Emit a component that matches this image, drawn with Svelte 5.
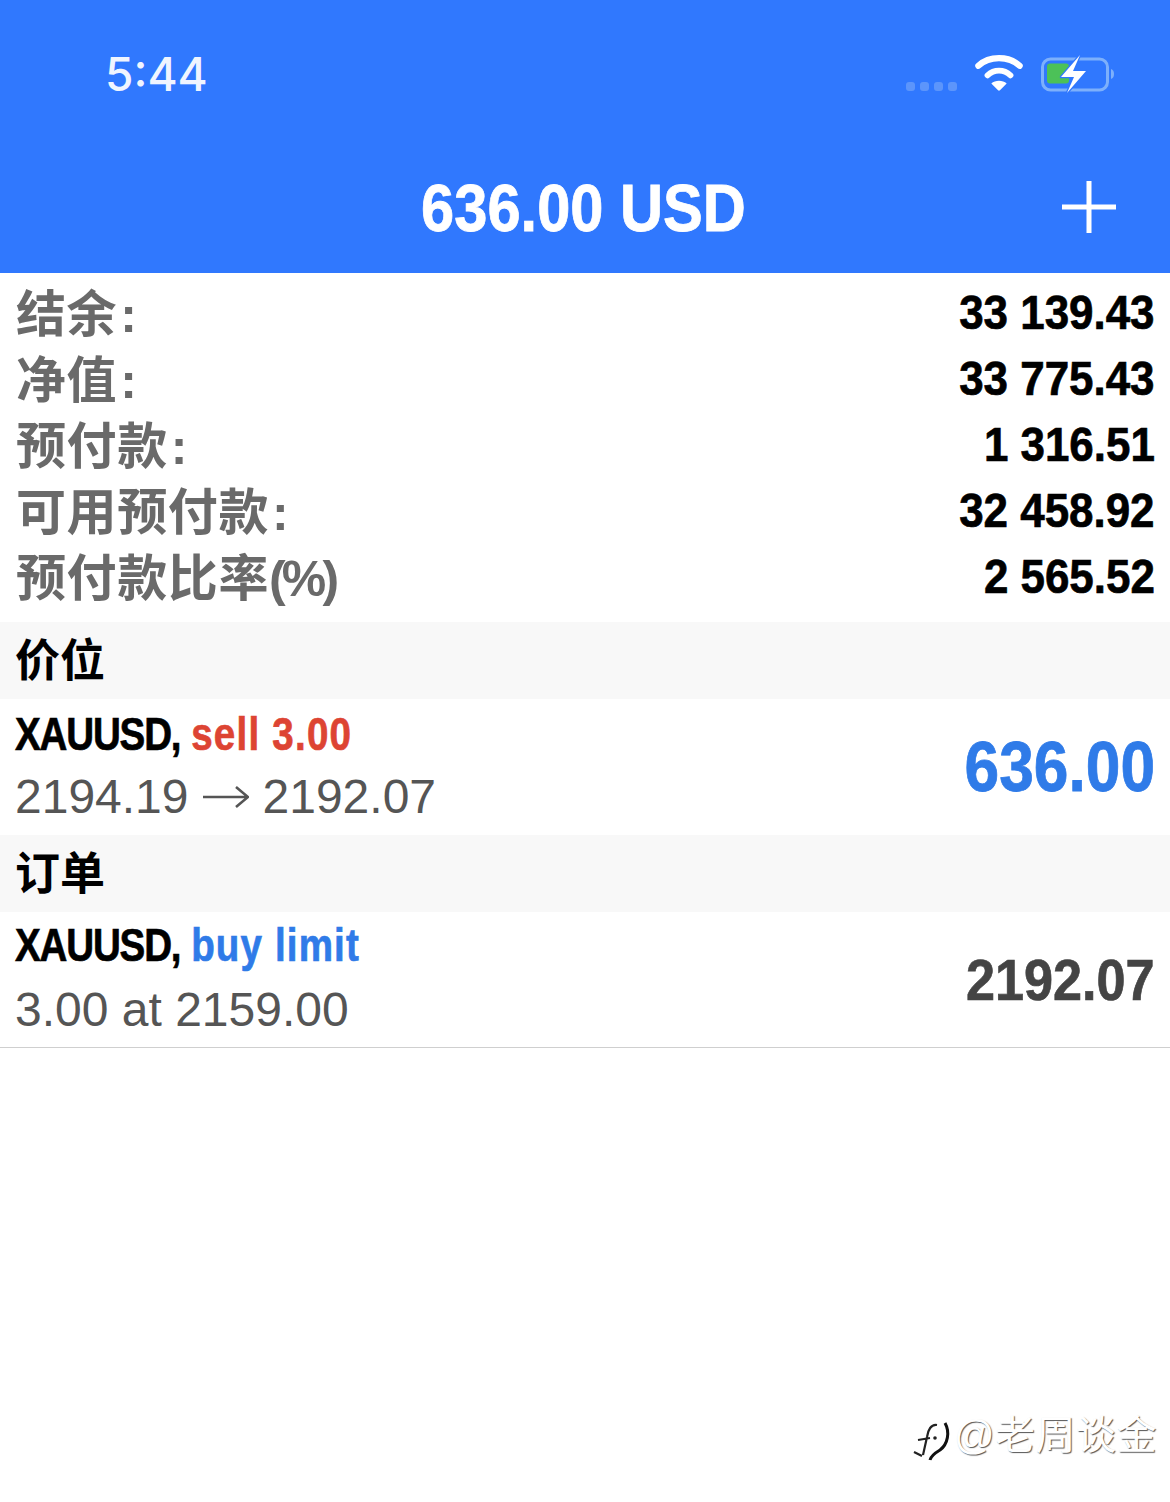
<script>
    const summary = [
        { label: "结余", colon: true, value: "33 139.43" },
        { label: "净值", colon: true, value: "33 775.43" },
        { label: "预付款", colon: true, value: "1 316.51" },
        { label: "可用预付款", colon: true, value: "32 458.92" },
        { label: "预付款比率", unit: "(%)", value: "2 565.52" },
    ];
</script>

<div class="page">
    <header class="top">
        <div class="status">
            <span class="time">5:44</span>
            <div class="status-icons">
                <div class="signal"><i></i><i></i><i></i><i></i></div>
                <svg class="wifi" width="48" height="38" viewBox="0 0 50 38" aria-hidden="true">
                    <path d="M3.5 11.5 C15 1 35 1 46.5 11.5" fill="none" stroke="#fff" stroke-width="6.5" stroke-linecap="round" />
                    <path d="M13 21.5 C20 15 30 15 37 21.5" fill="none" stroke="#fff" stroke-width="6" stroke-linecap="round" />
                    <path d="M17 30 C21 26 29 26 33 30 L26 37 Q25 38 24 37 Z" fill="#fff" />
                </svg>
                <svg class="battery" width="78" height="38" viewBox="0 0 78 38" aria-hidden="true">
                    <rect x="3.5" y="4" width="65" height="31" rx="8" fill="none" stroke="#7db0fb" stroke-width="3" />
                    <rect x="8" y="8.5" width="22" height="20" rx="3" fill="#4cc158" />
                    <path d="M72 14 C76 15 76 23 72 24 Z" fill="#7db0fb" />
                    <path d="M41 0 L22 22 H35 L28 38 L47 16 H34 Z" fill="#fff" stroke="#3078fe" stroke-width="2.5" paint-order="stroke" stroke-linejoin="round" />
                </svg>
            </div>
        </div>
        <div class="title-bar">
            <h1>636.00 USD</h1>
            <svg class="plus" width="56" height="56" viewBox="0 0 56 56" aria-hidden="true">
                <path d="M28 2 V54 M1 28 H55" stroke="#fff" stroke-width="5" fill="none" />
            </svg>
        </div>
    </header>

    <section class="summary">
        {#each summary as row}
            <div class="summary-row">
                <span class="label">{row.label}{#if row.colon}<span class="colon">:</span>{/if}{#if row.unit}<span class="unit">{row.unit}</span>{/if}</span>
                <span class="value">{row.value}</span>
            </div>
        {/each}
    </section>

    <div class="section-head">价位</div>
    <div class="item">
        <div>
            <div class="name"><span class="symbol">XAUUSD,</span> <span class="sell">sell 3.00</span></div>
            <div class="detail">2194.19<svg class="arrow" width="46" height="24" viewBox="0 0 46 24" aria-hidden="true"><path d="M0 12 H44 M33 2 L45 12 L33 22" fill="none" stroke="#555" stroke-width="2.6" /></svg>2192.07</div>
        </div>
        <div class="profit">636.00</div>
    </div>

    <div class="section-head">订单</div>
    <div class="item last">
        <div>
            <div class="name"><span class="symbol">XAUUSD,</span> <span class="buy">buy limit</span></div>
            <div class="detail">3.00 at 2159.00</div>
        </div>
        <div class="price">2192.07</div>
    </div>

    <div class="watermark">
        <svg width="42" height="50" viewBox="0 0 42 50" aria-hidden="true">
            <path d="M25 13 C19 12 16 18 15 25 L11 43 M6 28 L18 26 M2 40 L10 44" fill="none" stroke="#222" stroke-width="2.2" />
            <path d="M33 11 C38 20 36 32 28 38 C23 41 19 44 18 48" fill="none" stroke="#111" stroke-width="3" />
            <circle cx="23" cy="26" r="1.8" fill="#222" />
        </svg>
        <span>@老周谈金</span>
    </div>
</div>

<style>
    :global(body) {
        background: #fff;
    }
    .page {
        position: relative;
        width: 1170px;
        height: 1502px;
        overflow: hidden;
        font-family: "Liberation Sans", "Noto Sans CJK SC", sans-serif;
        background: #fff;
    }
    .top {
        height: 273px;
        background: #3078fe;
        color: #fff;
    }
    .status {
        height: 146px;
        display: flex;
        justify-content: space-between;
        align-items: flex-start;
        padding: 0 53px 0 105px;
        box-sizing: border-box;
    }
    .time {
        margin-top: 47px;
        font-size: 46px;
        line-height: 54px;
        font-family: "Inter", "Liberation Sans", sans-serif;
        font-weight: 500;
        color: #f0f5ff;
    }
    .status-icons {
        display: flex;
        align-items: flex-start;
        margin-top: 54px;
    }
    .signal {
        display: flex;
        gap: 5px;
        margin: 28px 18px 0 0;
    }
    .signal i {
        width: 9px;
        height: 9px;
        border-radius: 3px;
        background: #5c95fb;
    }
    .battery {
        margin-left: 16px;
        margin-top: 1px;
    }
    .title-bar {
        position: relative;
        height: 127px;
        display: flex;
        align-items: center;
        justify-content: center;
    }
    h1 {
        margin: 0 0 4px -3px;
        font-size: 67px;
        font-weight: 700;
        transform: scaleX(0.89);
        -webkit-text-stroke: 0.8px #fff;
    }
    .plus {
        position: absolute;
        right: 53px;
        top: 33px;
    }
    .summary {
        padding-top: 7px;
        height: 349px;
        box-sizing: border-box;
    }
    .summary-row {
        height: 66px;
        display: flex;
        align-items: center;
        justify-content: space-between;
        padding: 0 15px 0 16px;
    }
    .label {
        font-size: 50px;
        font-weight: 700;
        color: #6a6a6a;
        letter-spacing: 0.6px;
        margin-bottom: 7px;
    }
    .colon {
        margin-left: 3px;
    }
    .unit {
        letter-spacing: -3.8px;
    }
    .value {
        font-size: 48px;
        font-weight: 700;
        color: #000;
        margin-bottom: 2px;
        transform: scaleX(0.915);
        transform-origin: right center;
        -webkit-text-stroke: 0.7px #000;
    }
    .section-head {
        height: 77px;
        padding-bottom: 6px;
        box-sizing: border-box;
        display: flex;
        align-items: center;
        padding-left: 15px;
        font-size: 45px;
        font-weight: 700;
        color: #000;
        background: #f8f8f8;
    }
    .item {
        height: 136px;
        display: flex;
        align-items: center;
        justify-content: space-between;
        padding: 0 15px;
        box-sizing: border-box;
    }
    .item > div:first-child {
        margin-top: -3px;
    }
    .item.last {
        border-bottom: 1px solid #cfcfcf;
    }
    .item.last .detail {
        margin-top: 2px;
    }
    .name {
        font-size: 47px;
        line-height: 62px;
        font-weight: 700;
        color: #000;
        transform: scaleX(0.82);
        transform-origin: left center;
        -webkit-text-stroke: 0.7px;
    }
    .symbol {
        letter-spacing: -1.4px;
    }
    .sell {
        color: #dd4433;
        letter-spacing: 1.5px;
    }
    .buy {
        color: #2f7be8;
        letter-spacing: 1.4px;
    }
    .detail {
        font-size: 48px;
        line-height: 64px;
        color: #555;
        display: flex;
        align-items: center;
    }
    .arrow {
        margin: 0 14px 0 14px;
    }
    .profit {
        font-size: 70px;
        font-weight: 700;
        color: #2f7be8;
        transform: scaleX(0.89);
        transform-origin: right center;
        -webkit-text-stroke: 0.8px #2f7be8;
    }
    .price {
        font-size: 58px;
        font-weight: 700;
        color: #444;
        transform: scaleX(0.9);
        transform-origin: right center;
        -webkit-text-stroke: 0.7px #444;
    }
    .watermark {
        position: absolute;
        left: 912px;
        top: 1412px;
        display: flex;
        align-items: flex-start;
    }
    .watermark span {
        font-size: 40px;
        line-height: 46px;
        letter-spacing: 0.5px;
        margin-left: 0;
        color: #fff;
        text-shadow: 1px 1px 1px #555;
    }
</style>
